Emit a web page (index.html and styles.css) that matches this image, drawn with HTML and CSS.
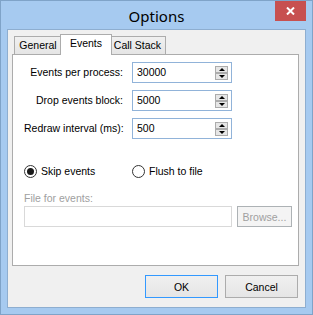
FILE: index.html
```html
<!DOCTYPE html>
<html>
<head>
<meta charset="utf-8">
<link rel="stylesheet" href="styles.css">
</head>
<body>
<div class="window">
  <div class="titlebar">
    <span class="title">Options</span>
    <div class="close">
      <svg width="9" height="8" viewBox="0 0 9 8"><path d="M1 0.5 L8 7.5 M8 0.5 L1 7.5" stroke="#fff" stroke-width="2" fill="none"/></svg>
    </div>
  </div>
  <div class="client">
    <div class="tabs">
      <div class="tab">General</div>
      <div class="tab active">Events</div>
      <div class="tab">Call Stack</div>
    </div>
    <div class="panel">
      <div class="fields">
        <label class="lbl">Events per process:</label>
        <div class="spin"><span class="val">30000</span><div class="arrows"><div class="arr up"></div><div class="arr down"></div></div></div>
        <label class="lbl">Drop events block:</label>
        <div class="spin"><span class="val">5000</span><div class="arrows"><div class="arr up"></div><div class="arr down"></div></div></div>
        <label class="lbl">Redraw interval (ms):</label>
        <div class="spin"><span class="val">500</span><div class="arrows"><div class="arr up"></div><div class="arr down"></div></div></div>
      </div>
      <div class="radios">
        <div class="radio checked"><span class="circle"></span>Skip events</div>
        <div class="radio"><span class="circle"></span>Flush to file</div>
      </div>
      <div class="filelbl">File for events:</div>
      <div class="filerow">
        <div class="fileinput"></div>
        <div class="browse">Browse...</div>
      </div>
    </div>
    <div class="buttons">
      <div class="btn default">OK</div>
      <div class="btn">Cancel</div>
    </div>
  </div>
</div>
</body>
</html>
```

FILE: styles.css
```css
html, body { margin: 0; padding: 0; background: #a6caf0; }
.window {
  width: 313px; height: 315px; box-sizing: border-box;
  background: #a6caf0; border: 1px solid #7fa3c8;
  display: flex; flex-direction: column;
  font-family: "Liberation Sans", Arial, sans-serif; font-size: 10.5px; color: #000;
}
.titlebar {
  height: 28px; position: relative;
  display: flex; align-items: center; justify-content: center;
}
.title { font-family: "Noto Sans", sans-serif; font-size: 15px; color: #000; margin-top: 1px; }
.close {
  position: absolute; right: 6px; top: 0; width: 31px; height: 20px;
  background: #c75050; display: flex; align-items: center; justify-content: center;
}
.client {
  margin: 0 6px 6px 6px; flex: 1; background: #f0f0f0;
  border: 1px solid #8eaed0; box-sizing: border-box;
  display: flex; flex-direction: column; padding: 6px 0 0 4px;
}
.tabs { display: flex; height: 18px; margin-left: 2px; position: relative; z-index: 2; }
.tab {
  height: 18px; box-sizing: border-box; border: 1px solid #acacac; border-bottom: none;
  background: linear-gradient(#f0f0f0, #e5e5e5); white-space: nowrap;
  padding: 0; text-align: center; line-height: 17px; margin-left: -1px;
}
.tab:first-child { margin-left: 0; width: 48px; }
.tab:last-child { width: 57px; }
.tab.active {
  background: #fff; height: 21px; margin-top: -2px; margin-bottom: -1px;
  margin-left: -2px; margin-right: -2px; line-height: 17px;
  position: relative; z-index: 3; width: 52px;
}
.panel {
  width: 287px; height: 212px; box-sizing: border-box; background: #fff;
  border: 1px solid #acacac; display: flex; flex-direction: column;
  padding: 7px 0 0 11px;
}
.fields {
  display: grid; grid-template-columns: 99px 100px; column-gap: 9px;
  grid-auto-rows: 21px; row-gap: 7px;
}
.lbl { text-align: right; line-height: 21px; white-space: nowrap; }
.spin {
  border: 1px solid #91b3d9; box-sizing: border-box; display: flex;
  align-items: center; justify-content: space-between; padding: 0 3px 0 4px;
}
.val { line-height: 19px; }
.arrows { display: flex; flex-direction: column; }
.arr {
  width: 13px; height: 7px; box-sizing: border-box; background: #e6e6e6;
  border: 1px solid #acacac; position: relative;
}
.arr::after {
  content: ""; position: absolute; left: 3px; width: 0; height: 0;
  border-left: 3.5px solid transparent; border-right: 3.5px solid transparent;
}
.arr.up::after { top: 1px; border-bottom: 3px solid #000; }
.arr.down::after { top: 1px; border-top: 3px solid #000; }
.radios { display: flex; margin-top: 26px; height: 13px; }
.radio { display: flex; align-items: center; gap: 4px; width: 108px; line-height: 13px; }
.circle {
  width: 13px; height: 13px; box-sizing: border-box; border-radius: 50%;
  border: 1px solid #333; background: #fff; display: flex;
  align-items: center; justify-content: center;
}
.radio.checked .circle::after {
  content: ""; width: 7px; height: 7px; border-radius: 50%; background: #1a1a1a;
}
.filelbl { color: #a0a0a0; margin-top: 14px; line-height: 13px; }
.filerow { display: flex; gap: 5px; margin-top: 1px; height: 21px; }
.fileinput { width: 208px; box-sizing: border-box; border: 1px solid #d9d9d9; background: #fff; }
.browse {
  width: 55px; box-sizing: border-box; border: 1px solid #adb2b5; background: #f4f4f4;
  color: #a0a0a0; display: flex; align-items: center; justify-content: center;
}
.buttons { display: flex; gap: 7px; margin-top: 9px; margin-left: 133px; }
.btn {
  width: 73px; height: 23px; box-sizing: border-box; border: 1px solid #acacac;
  background: linear-gradient(#f0f0f0, #e5e5e5);
  display: flex; align-items: center; justify-content: center;
}
.btn.default { border-color: #3399ff; }
```
